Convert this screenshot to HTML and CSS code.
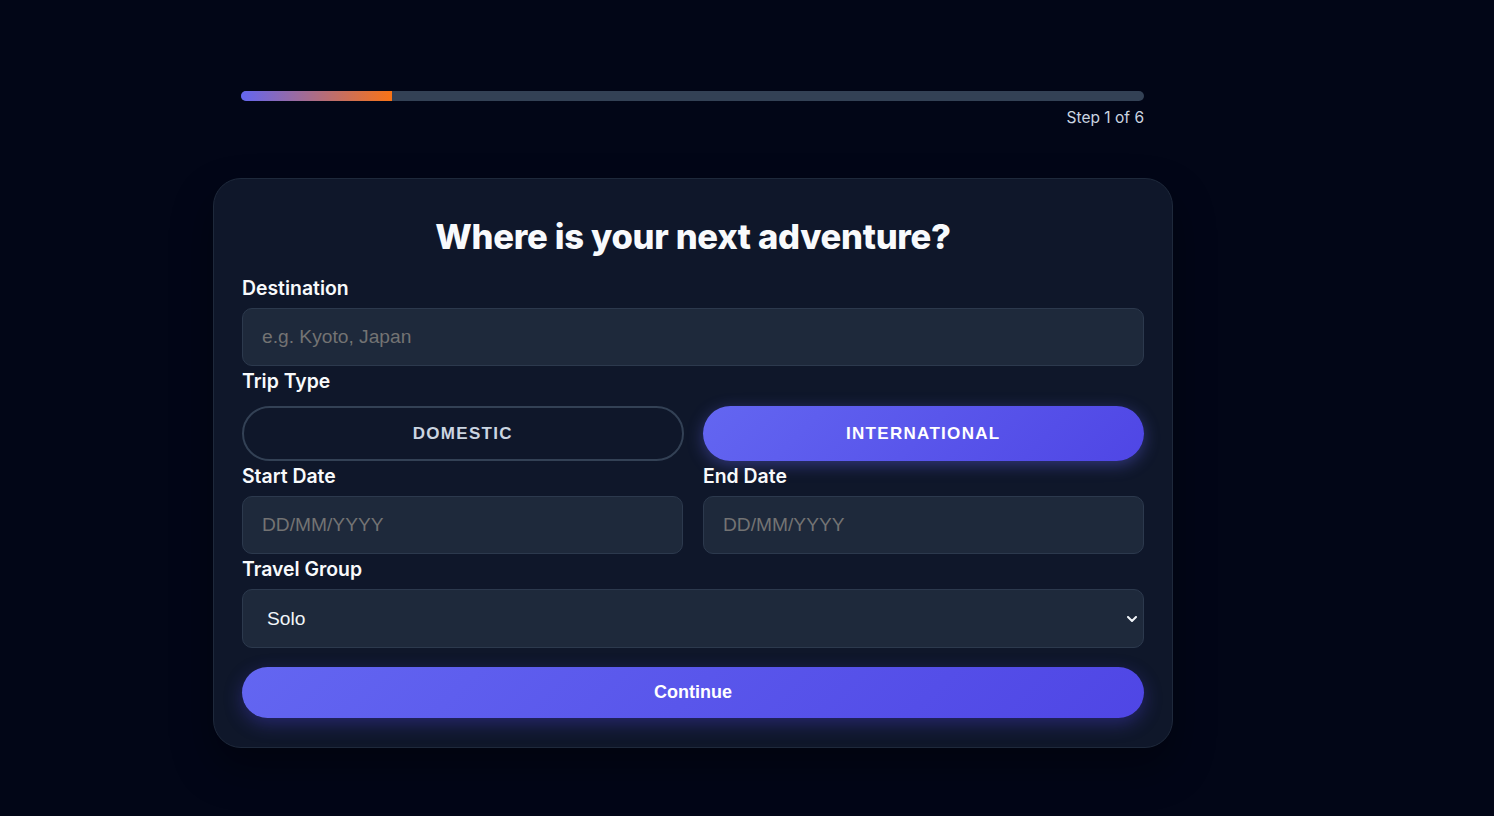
FILE: index.html
```html
<!DOCTYPE html>
<html lang="en">
<head>
<meta charset="utf-8">
<title>Trip Planner</title>
<link rel="stylesheet" href="styles.css">
</head>
<body>
<div class="wrap">
  <div class="progress">
    <div class="track"><div class="fill" style="width: 16.67%"></div></div>
    <div class="step">Step 1 of 6</div>
  </div>
  <form class="card">
    <h1 class="title">Where is your next adventure?</h1>
    <label class="label" for="dest">Destination</label>
    <input class="input" id="dest" type="text" placeholder="e.g. Kyoto, Japan">
    <div class="label trip-label">Trip Type</div>
    <div class="toggle">
      <button type="button" class="opt">DOMESTIC</button>
      <button type="button" class="opt active">INTERNATIONAL</button>
    </div>
    <div class="dates">
      <div class="col">
        <label class="label" for="start">Start Date</label>
        <input class="input" id="start" type="text" placeholder="DD/MM/YYYY">
      </div>
      <div class="col">
        <label class="label" for="end">End Date</label>
        <input class="input" id="end" type="text" placeholder="DD/MM/YYYY">
      </div>
    </div>
    <label class="label" for="group">Travel Group</label>
    <div class="select-wrap">
      <select class="select" id="group">
        <option>Solo</option>
        <option>Couple</option>
        <option>Family</option>
        <option>Friends</option>
      </select>
      <svg class="chev" width="10" height="6" viewBox="0 0 10 6" aria-hidden="true"><path d="M1 1l4 4 4-4" fill="none" stroke="#f1f5f9" stroke-width="2" stroke-linecap="round" stroke-linejoin="round"/></svg>
    </div>
    <button type="button" class="continue">Continue</button>
  </form>
</div>
</body>
</html>
```
FILE: styles.css
```css
* { box-sizing: border-box; }
html, body { height: 100%; }
body {
  margin: 0;
  background: #020617;
  font-family: Inter, "Noto Sans", sans-serif;
  color: #f8fafc;
}
.wrap {
  width: 960px;
  margin-left: 213px;
  padding-top: 91px;
}
.progress {
  padding: 0 29px 0 28px;
}
.track {
  height: 10px;
  border-radius: 5px;
  background: #334155;
  overflow: hidden;
}
.fill {
  height: 100%;
  background: linear-gradient(90deg, #6366f1, #f97316);
}
.step {
  text-align: right;
  margin-top: 6px;
  font-size: 15.5px;
  line-height: 21px;
  color: #cbd5e1;
}
.card {
  margin-top: 50px;
  background: #0f172a;
  border: 1px solid #1e293b;
  border-radius: 28px;
  padding: 36px 28px 29px;
  box-shadow: 0 20px 40px rgba(0, 0, 0, 0.35);
  display: flex;
  flex-direction: column;
}
.title {
  margin: 0 0 19px;
  text-align: center;
  font-size: 34.6px;
  line-height: 42px;
  font-weight: 800;
  letter-spacing: -0.3px;
  color: #f8fafc;
}
.label {
  display: block;
  font-size: 19.4px;
  line-height: 24px;
  font-weight: 600;
  color: #f8fafc;
  margin-bottom: 8px;
}
.trip-label { margin-bottom: 13px; }
.input {
  display: block;
  width: 100%;
  height: 58px;
  margin: 0 0 3px;
  padding: 0 19px;
  background: #1e293b;
  border: 1px solid #2c394d;
  border-radius: 10px;
  color: #f1f5f9;
  font-family: "Liberation Sans", Arial, sans-serif;
  font-size: 19.2px;
  outline: none;
}
.input::placeholder { color: #737373; }
.toggle {
  display: grid;
  grid-template-columns: 1fr 1fr;
  gap: 19px;
  margin-bottom: 3px;
}
.opt {
  height: 55px;
  border-radius: 999px;
  border: 2px solid #334155;
  background: transparent;
  color: #cbd5e1;
  font-family: "Liberation Sans", Arial, sans-serif;
  font-weight: 700;
  font-size: 17px;
  letter-spacing: 1.3px;
  cursor: pointer;
}
.opt.active {
  border: none;
  background: linear-gradient(135deg, #6366f1, #4f46e5);
  color: #ffffff;
  box-shadow: 0 4px 16px rgba(99, 102, 241, 0.4);
}
.dates {
  display: grid;
  grid-template-columns: 1fr 1fr;
  gap: 20px;
}
.select-wrap {
  position: relative;
  margin-bottom: 19px;
}
.select {
  display: block;
  width: 100%;
  height: 59px;
  padding: 0 40px 0 24px;
  appearance: none;
  -webkit-appearance: none;
  background: #1e293b;
  border: 1px solid #2c394d;
  border-radius: 10px;
  color: #f1f5f9;
  font-family: "Liberation Sans", Arial, sans-serif;
  font-size: 19.2px;
  outline: none;
}
.chev {
  position: absolute;
  right: 7px;
  top: 27px;
  pointer-events: none;
}
.continue {
  height: 51px;
  border: none;
  border-radius: 999px;
  background: linear-gradient(135deg, #6366f1, #4f46e5);
  color: #ffffff;
  font-family: "Liberation Sans", Arial, sans-serif;
  font-weight: 700;
  font-size: 18px;
  box-shadow: 0 6px 18px rgba(79, 70, 229, 0.35);
  cursor: pointer;
}
```
